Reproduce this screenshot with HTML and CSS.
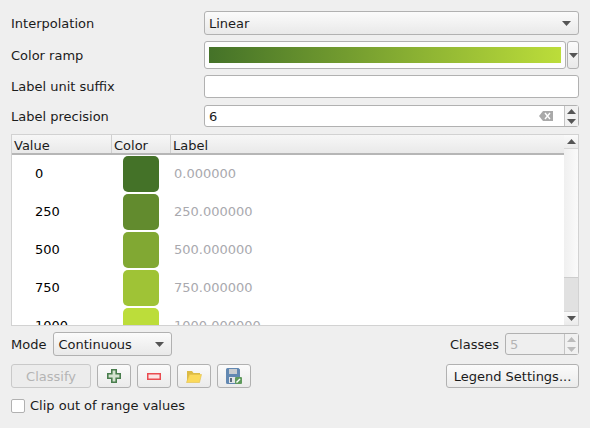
FILE: index.html
```html
<!DOCTYPE html>
<html lang="en">
<head>
  <meta charset="UTF-8">
  <meta name="viewport" content="width=device-width, initial-scale=1.0">
  <title>Color Ramp Settings</title>
  <link rel="stylesheet" href="styles.css">
</head>
<body>

  <div class="form-grid">
    <label>Interpolation</label>
    <div class="combo">
      <span>Linear</span>
      <svg class="arrow" width="9" height="5" viewBox="0 0 9 5"><path d="M0 0h9L4.5 5z"/></svg>
    </div>

    <label>Color ramp</label>
    <div class="ramp-wrap">
      <div class="ramp-btn"><div class="ramp-fill"></div></div>
      <div class="ramp-menu">
        <svg class="arrow" width="9" height="5" viewBox="0 0 9 5"><path d="M0 0h9L4.5 5z"/></svg>
      </div>
    </div>

    <label>Label unit suffix</label>
    <div class="line-edit"></div>

    <label class="prec-label">Label precision</label>
    <div class="spin prec-spin">
      <span class="spin-value">6</span>
      <svg class="clear-icon" width="14" height="10" viewBox="0 0 14 10">
        <path d="M4 0h10v10H4L0 5z" fill="#a9a9a9"/>
        <path d="M6 2l5 6M11 2l-5 6" stroke="#fff" stroke-width="1.4"/>
      </svg>
      <div class="spin-btns">
        <div class="spin-btn"><svg width="9" height="5" viewBox="0 0 9 5"><path d="M0 5h9L4.5 0z" fill="#555"/></svg></div>
        <div class="spin-btn"><svg width="9" height="5" viewBox="0 0 9 5"><path d="M0 0h9L4.5 5z" fill="#555"/></svg></div>
      </div>
    </div>
  </div>

  <div class="table">
    <div class="table-main">
      <div class="table-head">
        <div class="th th-value">Value</div>
        <div class="th th-color">Color</div>
        <div class="th th-label">Label</div>
      </div>
      <div class="table-body">
        <div class="tr"><span class="td-value">0</span><span class="swatch swatch-0"></span><span class="td-label">0.000000</span></div>
        <div class="tr"><span class="td-value">250</span><span class="swatch swatch-1"></span><span class="td-label">250.000000</span></div>
        <div class="tr"><span class="td-value">500</span><span class="swatch swatch-2"></span><span class="td-label">500.000000</span></div>
        <div class="tr"><span class="td-value">750</span><span class="swatch swatch-3"></span><span class="td-label">750.000000</span></div>
        <div class="tr"><span class="td-value">1000</span><span class="swatch swatch-4"></span><span class="td-label">1000.000000</span></div>
      </div>
    </div>
    <div class="scrollbar">
      <div class="sb-btn sb-up"><svg width="9" height="5" viewBox="0 0 9 5"><path d="M0 5h9L4.5 0z" fill="#555"/></svg></div>
      <div class="sb-track"></div>
      <div class="sb-thumb"></div>
      <div class="sb-btn sb-down"><svg width="9" height="5" viewBox="0 0 9 5"><path d="M0 0h9L4.5 5z" fill="#555"/></svg></div>
    </div>
  </div>

  <div class="mode-row">
    <label>Mode</label>
    <div class="combo mode-combo">
      <span>Continuous</span>
      <svg class="arrow" width="9" height="5" viewBox="0 0 9 5"><path d="M0 0h9L4.5 5z"/></svg>
    </div>
    <label class="classes-label">Classes</label>
    <div class="spin classes-spin">
      <span class="spin-value">5</span>
      <div class="spin-btns">
        <div class="spin-btn"><svg width="9" height="5" viewBox="0 0 9 5"><path d="M0 5h9L4.5 0z" fill="#bbb"/></svg></div>
        <div class="spin-btn"><svg width="9" height="5" viewBox="0 0 9 5"><path d="M0 0h9L4.5 5z" fill="#bbb"/></svg></div>
      </div>
    </div>
  </div>

  <div class="button-row">
    <button class="btn btn-classify" disabled>Classify</button>
    <button class="btn btn-icon">
      <svg width="14" height="14" viewBox="0 0 14 14"><path d="M4.800.8h4.400v4h4v4.400h-4v4H4.800v-4h-4V4.800h4z" fill="#d5e3d0" stroke="#4a7e4e" stroke-width="1.600"/></svg>
    </button>
    <button class="btn btn-icon">
      <svg width="14" height="7" viewBox="0 0 14 7"><rect x=".75" y=".75" width="12.500" height="5.500" fill="#fbe4e4" stroke="#ea4b50" stroke-width="1.500"/></svg>
    </button>
    <button class="btn btn-icon">
      <svg width="16" height="13" viewBox="0 0 16 13"><path d="M1 12V1h5l1.500 2H14v2H4z" fill="#dcbb45"/><path d="M0.500 12.500l3-8h12l-2 8z" fill="#fbd95a" stroke="#e3c04a" stroke-width=".6"/></svg>
    </button>
    <button class="btn btn-icon">
      <svg width="16" height="16" viewBox="0 0 16 16">
        <path d="M0 1.500A1.500 1.500 0 0 1 1.500 0h11L14 1.500V16H1.500A1.500 1.500 0 0 1 0 14.500z" fill="#6288b2"/>
        <rect x="3" y="1" width="8" height="5" fill="#c8ccd0"/>
        <rect x="3" y="9" width="8" height="6" fill="#e3e5e8"/>
        <rect x="4" y="10" width="2" height="4" fill="#5b6b7c"/>
        <rect x="9" y="9" width="7" height="7" rx="1" fill="#5f9a5c"/>
        <path d="M10.500 14.500l3.500-3.500" stroke="#fff" stroke-width="1.400"/>
      </svg>
    </button>
    <button class="btn btn-legend">Legend Settings...</button>
  </div>

  <div class="clip-row">
    <span class="checkbox"></span>
    <label>Clip out of range values</label>
  </div>

</body>
</html>
```

FILE: styles.css
```css
* {
  margin: 0;
  padding: 0;
  box-sizing: border-box;
}

body {
  width: 590px;
  height: 428px;
  overflow: hidden;
  padding: 11px 11px 0;
  background-color: #efefef;
  color: #1b1b1b;
  font-family: "DejaVu Sans", sans-serif;
  font-size: 13px;
}

.arrow {
  fill: #555;
  flex: none;
}

/* top form */
.form-grid {
  display: grid;
  grid-template-columns: 193px 375px;
  grid-template-rows: 24px 28px 23px 23px;
  row-gap: 6px;
  align-items: center;
}

.prec-label {
  padding-top: 1px;
}

.prec-spin {
  height: 22px;
  align-self: end;
}

.combo {
  display: flex;
  align-items: center;
  justify-content: space-between;
  height: 24px;
  padding: 0 7px 0 4px;
  border: 1px solid #b1b1b1;
  border-radius: 3px;
  background: linear-gradient(#fbfbfb, #e9e9e9);
}

.ramp-wrap {
  display: flex;
  height: 28px;
  gap: 1px;
}

.ramp-btn {
  flex: 1;
  padding: 5px 4px;
  border: 1px solid #b1b1b1;
  border-radius: 3px;
  background-color: #fdfdfd;
}

.ramp-fill {
  height: 100%;
  background: linear-gradient(to right, #447228, #bcdd3a);
}

.ramp-menu {
  display: flex;
  align-items: center;
  justify-content: center;
  width: 12px;
  border: 1px solid #b1b1b1;
  border-radius: 3px;
  background: linear-gradient(#fbfbfb, #e9e9e9);
}

.line-edit {
  height: 23px;
  border: 1px solid #b1b1b1;
  border-radius: 3px;
  background-color: #fff;
}

.spin {
  display: flex;
  align-items: center;
  border: 1px solid #b1b1b1;
  border-radius: 3px;
  background-color: #fff;
}

.spin-value {
  flex: 1;
  padding-left: 4px;
}

.clear-icon {
  margin-right: 11px;
}

.spin-btns {
  display: flex;
  flex-direction: column;
  align-self: stretch;
  width: 14px;
  border-left: 1px solid #c4c4c4;
  background-color: #f1f1f1;
}

.spin-btn {
  flex: 1;
  display: flex;
  align-items: center;
  justify-content: center;
}

/* table */
.table {
  display: flex;
  height: 192px;
  margin-top: 7px;
  border: 1px solid #d2d2d2;
  background-color: #fff;
  overflow: hidden;
}

.table-main {
  width: 552px;
}

.table-head {
  display: flex;
  height: 20px;
  border-bottom: 2px solid #b6b6b6;
  background: linear-gradient(#f7f7f7, #e9e9e9);
}

.th {
  padding: 2px 2px 0;
  border-right: 1px solid #d0d0d0;
  line-height: 18px;
}

.th-value {
  width: 100px;
}

.th-color {
  width: 59px;
}

.th-label {
  flex: 1;
  border-right: 0;
}

.table-body {
  padding-top: 1px;
}

.tr {
  display: flex;
  align-items: center;
  height: 38px;
  padding-bottom: 2px;
}

.td-value {
  width: 111px;
  padding: 0 0 2px 23px;
  color: #000;
}

.swatch {
  width: 36px;
  height: 36px;
  border-radius: 5px;
  flex: none;
}

.swatch-0 { background-color: #447228; }
.swatch-1 { background-color: #628b2e; }
.swatch-2 { background-color: #81a833; }
.swatch-3 { background-color: #9fc336; }
.swatch-4 { background-color: #bcdd3a; }

.td-label {
  margin-left: 15px;
  padding-bottom: 2px;
  color: #a9a9ae;
}

.scrollbar {
  display: flex;
  flex-direction: column;
  width: 14px;
  background-color: #f7f7f7;
}

.sb-btn {
  display: flex;
  align-items: center;
  justify-content: center;
  height: 14px;
  background: linear-gradient(#fafafa, #ebebeb);
  border-bottom: 1px solid #d6d6d6;
}

.sb-down {
  border-top: 1px solid #d6d6d6;
  border-bottom: 0;
}

.sb-track {
  flex: 1;
  background: linear-gradient(to right, #f0f0f0, #fafafa);
}

.sb-thumb {
  height: 34px;
  background-color: #e1e1e1;
  border-top: 1px solid #cdcdcd;
}

/* bottom controls */
.mode-row {
  display: flex;
  align-items: center;
  height: 24px;
  margin-top: 6px;
}

.mode-combo {
  width: 119px;
  margin-left: 7px;
}

.classes-label {
  margin-left: auto;
  margin-right: 6px;
}

.classes-spin {
  width: 74px;
  height: 22px;
  color: #b4b4b4;
  background-color: #efefef;
}

.button-row {
  display: flex;
  gap: 6px;
  height: 24px;
  margin-top: 8px;
}

.btn {
  display: flex;
  align-items: center;
  justify-content: center;
  height: 24px;
  border: 1px solid #b1b1b1;
  border-radius: 3px;
  background: linear-gradient(#fbfbfb, #ebebeb);
  color: #1b1b1b;
  font-family: inherit;
  font-size: 13px;
}

.btn-classify {
  width: 80px;
  border-color: #c9c9c9;
  background: #ececec;
  color: #b4b4b4;
}

.btn-icon {
  width: 34px;
}

.btn-legend {
  width: 133px;
  margin-left: auto;
}

.clip-row {
  display: flex;
  align-items: center;
  gap: 5px;
  margin-top: 10px;
}

.checkbox {
  width: 14px;
  height: 14px;
  border: 1px solid #b1b1b1;
  border-radius: 2px;
  background-color: #fff;
}
```
